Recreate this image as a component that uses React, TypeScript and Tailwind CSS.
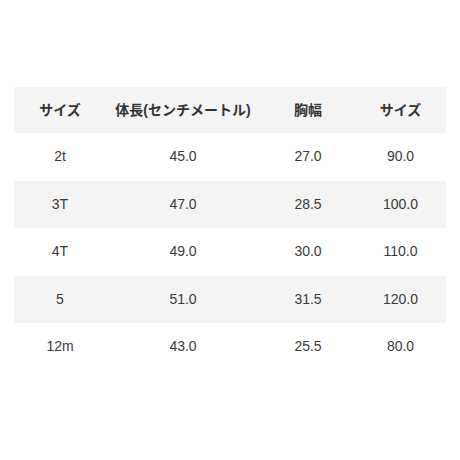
import React from 'react';

const rows = [
    ['2t', '45.0', '27.0', '90.0'],
    ['3T', '47.0', '28.5', '100.0'],
    ['4T', '49.0', '30.0', '110.0'],
    ['5', '51.0', '31.5', '120.0'],
    ['12m', '43.0', '25.5', '80.0'],
];

const cols = ['w-[92px]', 'w-[154px]', 'w-[96px]', 'w-[89px]'];

const App: React.FC = () => {
    return (
        <div
            className="w-[460px] h-[460px] bg-white pt-[87px] px-[14px]"
            style={{ fontFamily: '"Liberation Sans", "Noto Sans CJK JP", sans-serif' }}
        >
            <div className="flex h-[46px] items-center bg-[#f4f4f4] text-[14px] font-semibold text-[#333]">
                {['サイズ', '体長(センチメートル)', '胸幅', 'サイズ'].map((h, i) => (
                    <div key={i} className={`${cols[i]} text-center`}>
                        {h}
                    </div>
                ))}
            </div>
            {rows.map((r, ri) => (
                <div
                    key={ri}
                    className={`flex h-[47.5px] items-center text-[14px] text-[#3a3a3a] ${ri % 2 === 1 ? 'bg-[#f4f4f4]' : ''}`}
                >
                    {r.map((c, ci) => (
                        <div key={ci} className={`${cols[ci]} text-center`}>
                            {c}
                        </div>
                    ))}
                </div>
            ))}
        </div>
    );
};

export default App;
